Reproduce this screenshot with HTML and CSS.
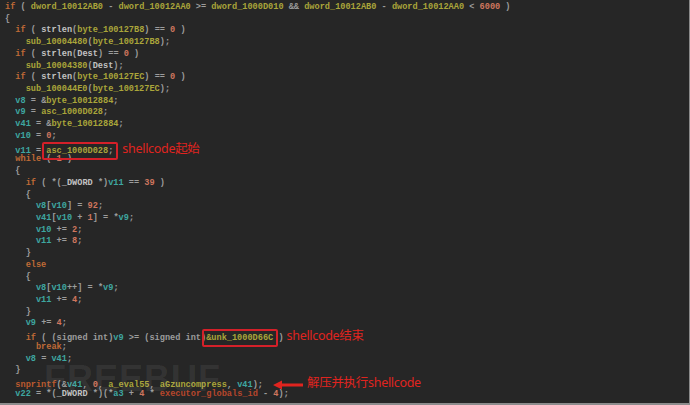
FILE: index.html
```html
<!DOCTYPE html>
<html lang="en">
<head>
    <meta charset="UTF-8">
    <title>shellcode</title>
    <link rel="stylesheet" href="styles.css">
</head>
<body>
    <div class="shot">
        <div class="code">
            <div class="ln"><span class="k">if</span> ( <span class="g">dword_10012AB0</span> - <span class="g">dword_10012AA0</span> &gt;= <span class="g">dword_1000D010</span> &amp;&amp; <span class="g">dword_10012AB0</span> - <span class="g">dword_10012AA0</span> &lt; <span class="n">6000</span> )</div>
            <div class="ln">{</div>
            <div class="ln">  <span class="k">if</span> ( <span class="f">strlen</span>(<span class="g">byte_100127B8</span>) == <span class="n">0</span> )</div>
            <div class="ln">    <span class="g">sub_10004480</span>(<span class="g">byte_100127B8</span>);</div>
            <div class="ln">  <span class="k">if</span> ( <span class="f">strlen</span>(<span class="f">Dest</span>) == <span class="n">0</span> )</div>
            <div class="ln">    <span class="g">sub_10004380</span>(<span class="f">Dest</span>);</div>
            <div class="ln">  <span class="k">if</span> ( <span class="f">strlen</span>(<span class="g">byte_100127EC</span>) == <span class="n">0</span> )</div>
            <div class="ln">    <span class="g">sub_100044E0</span>(<span class="g">byte_100127EC</span>);</div>
            <div class="ln">  <span class="v">v8</span> = &amp;<span class="g">byte_10012884</span>;</div>
            <div class="ln">  <span class="v">v9</span> = <span class="g">asc_1000D028</span>;</div>
            <div class="ln">  <span class="v">v41</span> = &amp;<span class="g">byte_10012884</span>;</div>
            <div class="ln">  <span class="v">v10</span> = <span class="n">0</span>;</div>
            <div class="ln">  <span class="v">v11</span> = <span class="box"><span class="g">asc_1000D028</span>;</span><span class="note note-start">shellcode起始</span></div>
            <div class="ln">  <span class="k">while</span> ( <span class="n">1</span> )</div>
            <div class="ln">  {</div>
            <div class="ln">    <span class="k">if</span> ( *(<span class="f">_DWORD</span> *)<span class="v">v11</span> == <span class="n">39</span> )</div>
            <div class="ln">    {</div>
            <div class="ln">      <span class="v">v8</span>[<span class="v">v10</span>] = <span class="n">92</span>;</div>
            <div class="ln">      <span class="v">v41</span>[<span class="v">v10</span> + <span class="n">1</span>] = *<span class="v">v9</span>;</div>
            <div class="ln">      <span class="v">v10</span> += <span class="n">2</span>;</div>
            <div class="ln">      <span class="v">v11</span> += <span class="n">8</span>;</div>
            <div class="ln">    }</div>
            <div class="ln">    <span class="k">else</span></div>
            <div class="ln">    {</div>
            <div class="ln">      <span class="v">v8</span>[<span class="v">v10</span>++] = *<span class="v">v9</span>;</div>
            <div class="ln">      <span class="v">v11</span> += <span class="n">4</span>;</div>
            <div class="ln">    }</div>
            <div class="ln">    <span class="v">v9</span> += <span class="n">4</span>;</div>
            <div class="ln">    <span class="k">if</span> ( (signed int)<span class="v">v9</span> &gt;= (signed int)<span class="box"><span class="g">&amp;unk_1000D66C</span></span> )<span class="note note-end">shellcode结束</span></div>
            <div class="ln">      <span class="k">break</span>;</div>
            <div class="ln">    <span class="v">v8</span> = <span class="v">v41</span>;</div>
            <div class="ln">  }</div>
            <div class="ln">  <span class="i">snprintf</span>(&amp;<span class="v">v41</span>, <span class="n">0</span>, <span class="g">a_eval55</span>, <span class="g">aGzuncompress</span>, <span class="v">v41</span>);<span class="arrow"><svg width="30" height="10" viewBox="0 0 30 10"><path d="M0 5 L9 0.5 L9 3.6 L30 3.6 L30 6.4 L9 6.4 L9 9.5 Z" fill="#e0241f"/></svg></span><span class="note">解压并执行shellcode</span></div>
            <div class="ln">  <span class="v">v22</span> = *(<span class="f">_DWORD</span> *)(*<span class="v">a3</span> + <span class="n">4</span> * <span class="r">executor_globals_id</span> - <span class="n">4</span>);</div>

            <div class="watermark">FREEBUF</div>
        </div>
    </div>
</body>
</html>
```

FILE: styles.css
```css
* {
    margin: 0;
    padding: 0;
    box-sizing: border-box;
}

body {
    background: #262626;
    width: 690px;
    height: 405px;
    overflow: hidden;
}

.shot {
    width: 690px;
    height: 405px;
    background: #262626;
    border-right: 1px solid #8a8a8a;
    border-bottom: 2px solid #8c8c8c;
    overflow: hidden;
}

.code {
    position: relative;
    padding: 2px 0 0 5px;
    font-family: "Liberation Mono", "DejaVu Sans Mono", monospace;
    font-size: 8.6px;
    font-weight: bold;
    color: #9c9c9c;
}

.ln {
    height: 11.73px;
    line-height: 11.73px;
    white-space: pre;
}

.k { color: #bf6a36; }
.g { color: #aaa53a; }
.f { color: #c2c2c2; }
.v { color: #3ea6a1; }
.n { color: #cf765e; }
.i { color: #bb5a2e; }
.r { color: #b6462c; }

.box {
    position: relative;
}

.box::after {
    content: "";
    position: absolute;
    left: -4px;
    right: -5px;
    top: -4px;
    bottom: -4px;
    border: 2px solid #d42029;
    border-radius: 2px;
}

.note {
    font-family: "Noto Sans", "Noto Sans CJK SC", sans-serif;
    font-size: 12.5px;
    font-weight: normal;
    color: #e0241f;
    letter-spacing: -0.3px;
}

.note-start {
    margin-left: 9px;
}

.note-end {
    margin-left: 3px;
}

.arrow {
    display: inline-block;
    margin: 0 4px 0 10px;
    vertical-align: middle;
}

.arrow svg {
    display: block;
}

.watermark {
    position: absolute;
    left: 44px;
    top: 358px;
    font-family: "Liberation Sans", sans-serif;
    font-size: 36px;
    font-weight: bold;
    letter-spacing: 1px;
    color: rgba(255, 255, 255, 0.07);
    pointer-events: none;
}
```
